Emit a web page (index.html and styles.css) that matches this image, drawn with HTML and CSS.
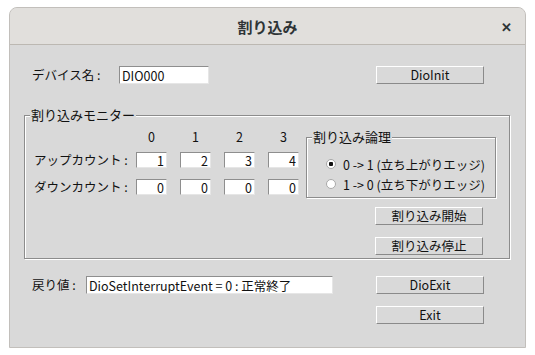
FILE: index.html
```html
<!DOCTYPE html>
<html lang="ja">
<head>
    <meta charset="UTF-8">
    <title>割り込み</title>
    <link rel="stylesheet" href="styles.css">
</head>
<body>
    <div class="window">
        <div class="titlebar">
            <span></span>
            <span class="title">割り込み</span>
            <span class="close">&#x2715;</span>
        </div>

        <div class="content">
            <!-- device row -->
            <div class="row device-row">
                <span class="label device-label">デバイス名 :</span>
                <input class="field device-field" type="text" value="DIO000">
                <button class="btn device-btn">DioInit</button>
            </div>

            <!-- monitor group -->
            <div class="group monitor">
                <span class="group-title">割り込みモニター</span>

                <div class="counts">
                    <span></span>
                    <span class="col-head">0</span>
                    <span class="col-head">1</span>
                    <span class="col-head">2</span>
                    <span class="col-head">3</span>

                    <span class="label">アップカウント :</span>
                    <input class="field num" type="text" value="1">
                    <input class="field num" type="text" value="2">
                    <input class="field num" type="text" value="3">
                    <input class="field num" type="text" value="4">

                    <span class="label">ダウンカウント :</span>
                    <input class="field num" type="text" value="0">
                    <input class="field num" type="text" value="0">
                    <input class="field num" type="text" value="0">
                    <input class="field num" type="text" value="0">
                </div>

                <div class="side">
                    <div class="group logic">
                        <span class="group-title">割り込み論理</span>
                        <label class="radio-row">
                            <input type="radio" name="edge" checked>
                            <span>0 -&gt; 1 (立ち上がりエッジ)</span>
                        </label>
                        <label class="radio-row">
                            <input type="radio" name="edge">
                            <span>1 -&gt; 0 (立ち下がりエッジ)</span>
                        </label>
                    </div>
                    <div class="btn-stack side-btns">
                        <button class="btn">割り込み開始</button>
                        <button class="btn">割り込み停止</button>
                    </div>
                </div>
            </div>

            <!-- return value row -->
            <div class="row result-row">
                <span class="label result-label">戻り値 :</span>
                <input class="field result-field" type="text" value="DioSetInterruptEvent = 0 : 正常終了">
                <div class="btn-stack">
                    <button class="btn">DioExit</button>
                    <button class="btn">Exit</button>
                </div>
            </div>
        </div>
    </div>
</body>
</html>
```

FILE: styles.css
```css
body {
    margin: 0;
    background-color: #ffffff;
    font-family: "Noto Sans CJK JP", "Noto Sans", sans-serif;
    font-size: 12.5px;
    color: #111111;
}

.window {
    box-sizing: border-box;
    width: 517px;
    height: 341px;
    margin: 7px 0 0 9px;
    border: 1px solid #c2bfbb;
    border-radius: 8px 8px 0 0;
    background-color: #d9d9d9;
    overflow: hidden;
}

.titlebar {
    display: grid;
    grid-template-columns: 1fr auto 1fr;
    align-items: center;
    height: 36px;
    background-color: #e1dfdc;
    border-bottom: 1px solid #bcb8b2;
}

.title {
    font-size: 15px;
    font-weight: bold;
    color: #2e3436;
}

.close {
    justify-self: end;
    padding-right: 13px;
    font-size: 13px;
    font-weight: bold;
    color: #2e3436;
}

.content {
    padding-left: 14px;
}

.row {
    display: flex;
    align-items: flex-start;
}

.label {
    line-height: 16px;
    white-space: nowrap;
}

.field {
    box-sizing: border-box;
    margin: 0;
    padding: 0 2px;
    border: 1px solid;
    border-color: #8e8e8e #e6e6e6 #e6e6e6 #8e8e8e;
    background-color: #ffffff;
    font-family: inherit;
    font-size: 12.5px;
    color: #111111;
    outline: none;
}

.btn {
    box-sizing: border-box;
    width: 108px;
    height: 18px;
    margin: 0;
    padding: 0;
    border: 1px solid;
    border-color: #ffffff #8a8a8a #8a8a8a #ffffff;
    background-color: #d9d9d9;
    font-family: inherit;
    font-size: 12.5px;
    line-height: 14px;
    color: #111111;
}

.btn-stack {
    display: flex;
    flex-direction: column;
    gap: 12px;
}

/* device row */

.device-row {
    margin-top: 21px;
    padding-left: 8px;
}

.device-label {
    width: 87px;
    line-height: 18px;
}

.device-field {
    width: 90px;
    height: 18px;
}

.device-btn {
    margin-left: 167px;
}

/* group boxes */

.group {
    position: relative;
    box-sizing: border-box;
    border: 1px solid #8c8c8c;
    box-shadow: inset 1px 1px 0 #ffffff, 1px 1px 0 #ffffff;
}

.group-title {
    position: absolute;
    top: -9px;
    left: 5px;
    padding: 0 1px;
    line-height: 16px;
    font-size: 13px;
    background-color: #d9d9d9;
}

.monitor {
    display: flex;
    width: 486px;
    height: 144px;
    margin-top: 31px;
}

.counts {
    display: grid;
    grid-template-columns: 89px repeat(4, 31px);
    grid-template-rows: 23px 27px 16px;
    column-gap: 13px;
    align-items: start;
    margin: 13px 0 0 9px;
}

.col-head {
    line-height: 16px;
    text-align: center;
}

.num {
    width: 31px;
    height: 16px;
    text-align: right;
    line-height: 14px;
}

.side {
    margin: 21px 0 0 7px;
}

.logic {
    width: 190px;
    height: 61px;
    padding: 16px 0 0 19px;
}

.radio-row {
    display: flex;
    align-items: center;
    gap: 7px;
    height: 20px;
    font-size: 12.5px;
}

.radio-row input {
    appearance: none;
    box-sizing: border-box;
    width: 10px;
    height: 10px;
    margin: 0;
    border: 1px solid #a9a9a9;
    border-radius: 50%;
    background-color: #ffffff;
}

.radio-row input:checked {
    background: radial-gradient(circle, #111111 0 2px, #ffffff 2.5px);
}

.side-btns {
    margin: 9px 0 0 69px;
}

/* result row */

.result-row {
    margin-top: 17px;
    padding-left: 8px;
}

.result-label {
    width: 54px;
    line-height: 18px;
}

.result-field {
    width: 247px;
    height: 18px;
}

.result-row .btn-stack {
    margin-left: 43px;
}
```
